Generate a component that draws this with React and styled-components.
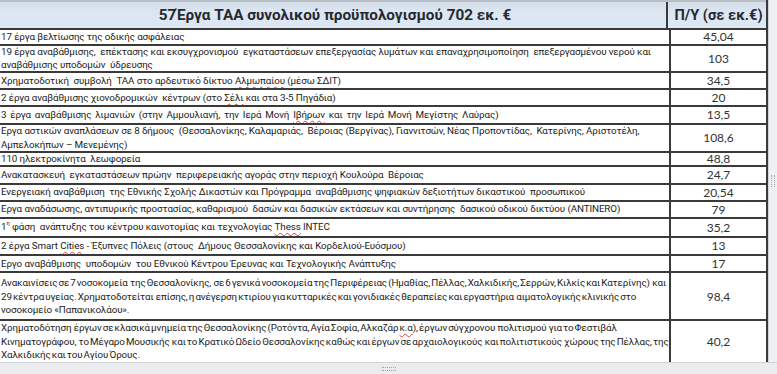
import React from "react";
import styled, { createGlobalStyle } from "styled-components";

const GlobalStyle = createGlobalStyle`
    html, body {
        margin: 0;
        padding: 0;
        background: #ffffff;
    }
    body {
        font-family: Roboto, "Liberation Sans", sans-serif;
    }
`;

const Frame = styled.div`
    width: 777px;
    height: 374px;
    display: flex;
    flex-direction: column;
    overflow: hidden;
    background: #ffffff;
`;

const Body = styled.div`
    display: flex;
    flex: 1;
    min-height: 0;
`;

const Table = styled.div`
    width: 768px;
    display: flex;
    flex-direction: column;
    border-right: 2px solid #3a3a3a;
    box-sizing: border-box;
`;

const HeaderRow = styled.div`
    display: flex;
    height: 30px;
    box-sizing: border-box;
    border-top: 2px solid #b9bfc6;
    border-bottom: 2px solid #3a3a3a;
    background: linear-gradient(#d3dde8, #dce7f3 40%, #dce7f3);
`;

const HeaderTitle = styled.div`
    flex: 1;
    display: flex;
    align-items: center;
    justify-content: center;
    font-size: 15.3px;
    font-weight: 700;
    color: #262a30;
    padding-left: 4px;
`;

const HeaderValue = styled.div`
    width: 95px;
    border-left: 2px solid #3a3a3a;
    display: flex;
    align-items: center;
    justify-content: center;
    padding-left: 3px;
    font-size: 14.6px;
    font-weight: 700;
    color: #262a30;
    white-space: nowrap;
`;

const Row = styled.div`
    display: flex;
    height: ${(p) => p.h}px;
    box-sizing: border-box;
    border-bottom: ${(p) => (p.last ? "none" : "2px solid #3a3a3a")};
`;

const Desc = styled.div`
    flex: 1;
    display: flex;
    flex-direction: column;
    justify-content: center;
    padding-left: 1px;
    font-size: 9.8px;
    letter-spacing: -0.1px;
    line-height: 13.5px;
    color: #222222;
    word-spacing: ${(p) => p.ws || 0}px;
    overflow: hidden;
`;

const Line = styled.div`
    white-space: pre;
`;

const Value = styled.div`
    width: 95px;
    border-left: 2px solid #3a3a3a;
    display: flex;
    align-items: center;
    justify-content: center;
    font-family: Lato, Roboto, sans-serif;
    font-size: 12px;
    color: #333333;
`;

const Misspelled = styled.span`
    text-decoration: underline wavy #e04040;
    text-decoration-thickness: 1px;
    text-underline-offset: 2px;
`;

const Sup = styled.sup`
    font-size: 6px;
    vertical-align: 5px;
    line-height: 0;
`;

const Gutter = styled.div`
    flex: 1;
    background: #eef0f2;
    border-left: 1px solid #d4d6d9;
    display: flex;
    align-items: center;
    justify-content: center;
`;

const GripV = styled.div`
    width: 2px;
    height: 12px;
    border-left: 1px dotted #a0a4a8;
    border-right: 1px dotted #a0a4a8;
`;

const BottomBar = styled.div`
    height: 11px;
    background: #ececee;
    border-top: 1px solid #cfd2d6;
    display: flex;
    align-items: center;
    justify-content: center;
`;

const GripH = styled.div`
    width: 14px;
    height: 2px;
    border-top: 1px dotted #a0a4a8;
    border-bottom: 1px dotted #a0a4a8;
`;

const rows = [
    { h: 16, v: "45,04", lines: ["17 έργα βελτίωσης της οδικής ασφάλειας"] },
    {
        h: 27,
        v: "103",
        lines: [
            "19 έργα αναβάθμισης,  επέκτασης και εκσυγχρονισμού  εγκαταστάσεων επεξεργασίας λυμάτων και επαναχρησιμοποίηση  επεξεργασμένου νερού και",
            "αναβάθμισης υποδομών  ύδρευσης",
        ],
    },
    { h: 17, v: "34,5", lines: ["Χρηματοδοτική  συμβολή  ΤΑΑ στο αρδευτικό δίκτυο [Αλμωπαίου] (μέσω ΣΔΙΤ)"] },
    { h: 17, v: "20", lines: ["2 έργα αναβάθμισης χιονοδρομικών  κέντρων (στο [Σέλι] και στα 3-5 Πηγάδια)"] },
    { h: 18, v: "13,5", ws: 1.5, lines: ["3 έργα αναβάθμισης λιμανιών (στην Αμμουλιανή, την Ιερά Μονή [Ιβήρων] και την Ιερά Μονή Μεγίστης Λαύρας)"] },
    {
        h: 28,
        v: "108,6",
        lines: [
            "Εργα αστικών αναπλάσεων σε 8 δήμους  (Θεσσαλονίκης, Καλαμαριάς,  Βέροιας (Βεργίνας), Γιαννιτσών, Νέας Προποντίδας,  Κατερίνης, Αριστοτέλη,",
            "Αμπελοκήπων – Μενεμένης)",
        ],
    },
    { h: 14, v: "48,8", lines: ["110 ηλεκτροκίνητα  λεωφορεία"] },
    { h: 18, v: "24,7", lines: ["Ανακατασκευή  εγκαταστάσεων πρώην  περιφερειακής αγοράς στην περιοχή Κουλούρα  Βέροιας"] },
    { h: 17, v: "20,54", lines: ["Ενεργειακή αναβάθμιση  της Εθνικής Σχολής Δικαστών και Πρόγραμμα  αναβάθμισης ψηφιακών δεξιοτήτων δικαστικού  προσωπικού"] },
    { h: 17, v: "79", lines: ["Εργα αναδάσωσης, αντιπυρικής προστασίας, καθαρισμού  δασών και δασικών εκτάσεων και συντήρησης  δασικού οδικού δικτύου (ANTINERO)"] },
    { h: 19, v: "35,2", lines: ["1^η φάση  ανάπτυξης του κέντρου καινοτομίας και τεχνολογίας [Thess] INTEC"] },
    { h: 18, v: "13", lines: ["2 έργα Smart [Cities] - Έξυπνες Πόλεις (στους  Δήμους Θεσσαλονίκης και Κορδελιού-Ευόσμου)"] },
    { h: 18, v: "17", lines: ["Εργο αναβάθμισης  υποδομών  του Εθνικού Κέντρου Έρευνας και Τεχνολογικής Ανάπτυξης"] },
    {
        h: 48,
        v: "98,4",
        ws: -1.2,
        lines: [
            "Ανακαινίσεις σε 7 νοσοκομεία  της Θεσσαλονίκης,  σε 6 γενικά νοσοκομεία της Περιφέρειας (Ημαθίας, Πέλλας, Χαλκιδικής, Σερρών, Κιλκίς και Κατερίνης)  και",
            "29 κέντρα υγείας. Χρηματοδοτείται  επίσης, η ανέγερση κτιρίου για κυτταρικές και γονιδιακές θεραπείες και εργαστήρια  αιματολογικής κλινικής στο",
            "νοσοκομείο  «Παπανικολάου».",
        ],
    },
    {
        h: 41,
        v: "40,2",
        ws: -1.2,
        lines: [
            "Χρηματοδότηση  έργων σε κλασικά μνημεία της Θεσσαλονίκης (Ροτόντα, Αγία Σοφία, Αλκαζάρ [κ.α]), έργων σύγχρονου  πολιτισμού  για το Φεστιβάλ",
            "Κινηματογράφου,  το Μέγαρο Μουσικής  και το Κρατικό Ωδείο Θεσσαλονίκης καθώς και έργων σε αρχαιολογικούς  και πολιτιστικούς  χώρους της Πέλλας, της",
            "Χαλκιδικής και του Αγίου Όρους.",
        ],
    },
];

// [λέξη] = κόκκινη υπογράμμιση ορθογραφίας, ^x = εκθέτης
const renderText = (text) =>
    text.split(/(\[[^\]]+\]|\^\S)/).map((part, i) => {
        if (part.startsWith("[")) return <Misspelled key={i}>{part.slice(1, -1)}</Misspelled>;
        if (part.startsWith("^")) return <Sup key={i}>{part.slice(1)}</Sup>;
        return part;
    });

export default function App() {
    return (
        <Frame>
            <GlobalStyle />
            <Body>
                <Table>
                    <HeaderRow>
                        <HeaderTitle>57Έργα ΤΑΑ συνολικού προϋπολογισμού 702 εκ. €</HeaderTitle>
                        <HeaderValue>Π/Υ (σε εκ.€)</HeaderValue>
                    </HeaderRow>
                    {rows.map((row, i) => (
                        <Row key={i} h={row.h} last={i === rows.length - 1}>
                            <Desc ws={row.ws}>
                                {row.lines.map((line, j) => (
                                    <Line key={j}>{renderText(line)}</Line>
                                ))}
                            </Desc>
                            <Value>{row.v}</Value>
                        </Row>
                    ))}
                </Table>
                <Gutter>
                    <GripV />
                </Gutter>
            </Body>
            <BottomBar>
                <GripH />
            </BottomBar>
        </Frame>
    );
}
